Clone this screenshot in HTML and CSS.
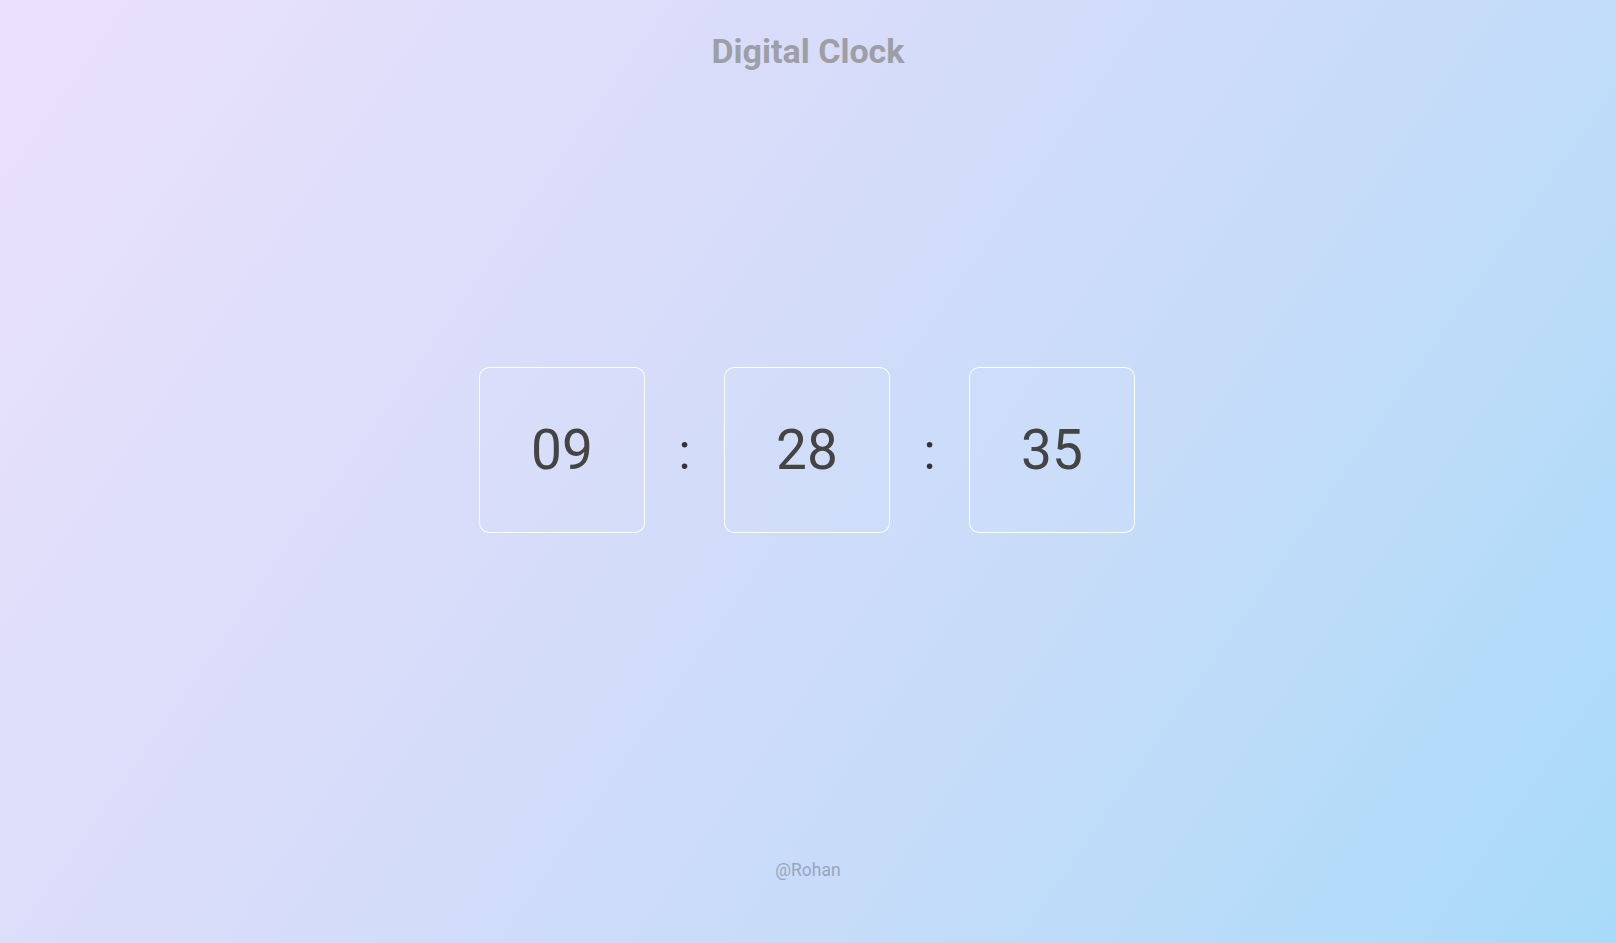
FILE: index.html
```html
<!DOCTYPE html>
<html lang="en">
<head>
<meta charset="UTF-8">
<title>Digital Clock</title>
<link rel="stylesheet" href="styles.css">
</head>
<body>
  <header class="header">
    <h1 class="title">Digital Clock</h1>
  </header>
  <main class="main">
    <div class="clock">
      <div class="unit">09</div>
      <span class="sep">:</span>
      <div class="unit">28</div>
      <span class="sep">:</span>
      <div class="unit">35</div>
    </div>
  </main>
  <footer class="footer">@Rohan</footer>
</body>
</html>
```
FILE: styles.css
```css
html, body {
  margin: 0;
  padding: 0;
  height: 100%;
}
body {
  min-height: 100vh;
  display: flex;
  flex-direction: column;
  font-family: Roboto, "Liberation Sans", sans-serif;
  background: linear-gradient(125deg, #ebe1fc 0%, #d6dcf9 40%, #c6dcf9 65%, #a8dbf9 100%);
  box-sizing: border-box;
}
.header {
  display: flex;
  justify-content: center;
  padding-top: 31px;
}
.title {
  margin: 0;
  font-size: 34px;
  line-height: 40px;
  font-weight: 700;
  color: #9d9ea6;
}
.main {
  flex: 1;
  display: flex;
  align-items: center;
  justify-content: center;
  padding-bottom: 31px;
}
.clock {
  display: flex;
  align-items: baseline;
  margin-left: -2px;
}
.unit {
  width: 166px;
  height: 166px;
  box-sizing: border-box;
  border: 1px solid rgba(255, 255, 255, 0.95);
  border-radius: 10px;
  background: rgba(255, 255, 255, 0.04);
  display: flex;
  align-items: center;
  justify-content: center;
  font-size: 55px;
  color: #444;
}
.sep {
  width: 79px;
  text-align: center;
  font-size: 50px;
  color: #333;
}
.footer {
  text-align: center;
  font-size: 17.5px;
  line-height: 21px;
  color: #97a5bf;
  padding-bottom: 62px;
}
```
